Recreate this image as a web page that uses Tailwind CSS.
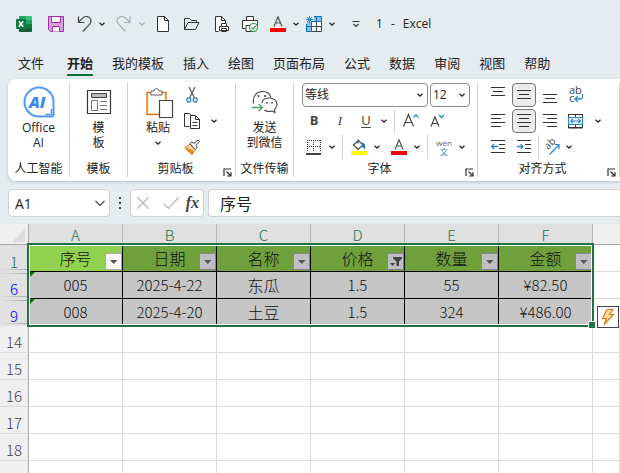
<!DOCTYPE html>
<html lang="zh-CN">
<head>
  <meta charset="UTF-8" />
  <meta name="viewport" content="width=device-width, initial-scale=1.0" />
  <title>1 - Excel</title>
  <script src="https://cdn.jsdelivr.net/npm/@tailwindcss/browser@4"></script>
</head>

<body class="min-h-screen overflow-hidden bg-[#e5ecef] font-['Open_Sans','Noto_Sans_CJK_SC',sans-serif] text-xs text-[#222]">

  <!-- ICONS -->
  <svg class="hidden">
    <symbol id="chev" viewBox="0 0 12 12"><path d="M3.500 4.800 6 7.200l2.500-2.400" fill="none" stroke="currentColor" stroke-width="1.300" /></symbol>
    <symbol id="launch" viewBox="0 0 9 9"><path d="M1 8V1h7M3.500 3.500 7.500 7.500M8 4v4H4" fill="none" stroke="#333" stroke-width="1.200" /></symbol>
    <symbol id="drop" viewBox="0 0 15 15"><path d="M4 6h7.500L7.750 10z" fill="#555" /></symbol>
  </svg>

  <!-- TITLE BAR -->
  <header class="flex h-12 items-center pl-4">
    <svg class="size-4 shrink-0" viewBox="0 0 16 16">
      <path d="M4 0h6v4H3V1a1 1 0 0 1 1-1z" fill="#21a366" /><path d="M10 0h5a1 1 0 0 1 1 1v3h-6z" fill="#33c481" />
      <path d="M3 4h7v4H3z" fill="#107c41" /><path d="M10 4h6v4h-6z" fill="#21a366" />
      <path d="M3 8h7v8H4a1 1 0 0 1-1-1z" fill="#185c37" /><path d="M10 8h6v4h-6z" fill="#107c41" /><path d="M9 12h7v3a1 1 0 0 1-1 1H9z" fill="#185c37" />
      <rect y="3" width="10" height="10" rx="1" fill="#0f7b40" />
      <path d="m2.800 5.200 4.400 5.600M7.200 5.200l-4.400 5.600" stroke="#fff" stroke-width="1.500" />
    </svg>
    <button class="ml-4" aria-label="保存">
      <svg class="size-4" viewBox="0 0 16 16" fill="#d9a0dc" stroke="#9a2fa5"><path d="M.5.500h15v15h-13l-2-2z" /><path d="M3.500.500h9v6h-9zM4.500 15.500v-5h7v5" fill="#fff" /></svg>
    </button>
    <button class="ml-3" aria-label="撤消">
      <svg class="size-4" viewBox="0 0 16 16" fill="none" stroke="#444" stroke-width="1.200"><path d="M2.500.500v6h6M2.500 6.300 7 1.900c2-1.900 5-1.800 6.700 0 1.700 1.700 1.700 4.600 0 6.300L6.800 15.500" /></svg>
    </button>
    <button class="ml-1 w-3" aria-label="撤消选项"><svg class="size-3"><use href="#chev" /></svg></button>
    <button class="ml-2 text-[#a5abae]" aria-label="恢复">
      <svg class="size-4" viewBox="0 0 16 16" fill="none" stroke="currentColor" stroke-width="1.200"><path d="M14 .500v6H8M14 6.300 9.300 1.900C7.300.100 4.300.100 2.500 1.900c-1.700 1.700-1.700 4.600 0 6.300l7 7.300" /></svg>
    </button>
    <button class="ml-1 w-3 text-[#a5abae]" aria-label="恢复选项"><svg class="size-3"><use href="#chev" /></svg></button>
    <button class="ml-2" aria-label="新建">
      <svg class="size-4" viewBox="0 0 16 16" fill="#fff" stroke="#333"><path d="M1.500.500h7l4 4v11h-11zM8.500.500v4h4" /></svg>
    </button>
    <button class="ml-3" aria-label="打开">
      <svg class="size-4" viewBox="0 0 16 16" fill="none" stroke="#333"><path d="M.500 13.500v-11h5l2 2h5v2M.500 13.500l3.500-7h11l-3.500 7z" /></svg>
    </button>
    <button class="ml-3.5" aria-label="打印预览">
      <svg class="size-4" viewBox="0 0 16 16" fill="#fff" stroke="#333"><path d="M4.500 15.500h-3V.500h6l4 4v3M7.500.500v4h4" /><path d="M7.500 10.500v-3h5v3M5.500 10.500h9v4h-9zM7.500 12.500h5v3h-5z" /></svg>
    </button>
    <button class="ml-3" aria-label="快速打印">
      <svg class="size-4" viewBox="0 0 16 16" fill="#fff" stroke="#333"><path d="M4.500 4.500v-4h7v4M3.500 12.500h-3v-8h15v8M4 9.500h8v6H4z" /><circle cx="11.500" cy="11.500" r="4" stroke="#3a9a54" stroke-width="1.200" /><path d="m9.500 11.500 1.500 1.500 2.800-3" fill="none" stroke="#3a9a54" stroke-width="1.300" /></svg>
    </button>
    <button class="ml-3" aria-label="字体颜色">
      <svg class="size-4" viewBox="0 0 16 16"><path d="M4 10.500 8 .700l4 9.800M5.300 7h5.400" fill="none" stroke="#555" stroke-width="1.200" /><path d="M0 12h16v4H0z" fill="#f00" /></svg>
    </button>
    <button class="ml-1 w-3" aria-label="字体颜色选项"><svg class="size-3"><use href="#chev" /></svg></button>
    <button class="ml-1" aria-label="表格样式">
      <svg class="size-4" viewBox="0 0 16 16"><path d="M1 6h14v9.500H1z" fill="#fff" /><path d="M8 1h7.500v4H8zM1 6h4v9.500H1z" fill="#83beec" /><path d="M5.500 6v9.500M10.500 1v14.500M1 10.500h14.500M6 15.500h9.500V5.500H6" fill="none" stroke="#444" /><path d="M8 .500h7.500v5H6M.500 8v7.500h5V6M.500 10.500h5M10.500.500v5" fill="none" stroke="#0f6cbd" /><path d="M3.500 0v7M0 3.500h7M1 1l5 5M6 1 1 6" stroke="#1e8bcd" /></svg>
    </button>
    <button class="ml-1 w-3" aria-label="表格样式选项"><svg class="size-3"><use href="#chev" /></svg></button>
    <button class="ml-2.5" aria-label="自定义快速访问工具栏">
      <svg class="size-4" viewBox="0 0 16 16" fill="none" stroke="#333" stroke-width="1.200"><path d="M4.500 5.500h7M5.500 8 8 10.500 10.500 8" /></svg>
    </button>
    <h1 class="ml-3 flex gap-2"><span>1</span><span>-</span><span>Excel</span></h1>
  </header>

  <!-- TABS -->
  <nav class="mb-[3px] flex gap-[19px] pl-[18px] text-[13px] leading-[22px] whitespace-nowrap">
    <button class="mr-1 border-b-2 border-transparent pt-1">文件</button>
    <button class="border-b-2 border-[#0f703b] pt-1 font-bold">开始</button>
    <button class="border-b-2 border-transparent pt-1">我的模板</button>
    <button class="border-b-2 border-transparent pt-1">插入</button>
    <button class="border-b-2 border-transparent pt-1">绘图</button>
    <button class="border-b-2 border-transparent pt-1">页面布局</button>
    <button class="border-b-2 border-transparent pt-1">公式</button>
    <button class="border-b-2 border-transparent pt-1">数据</button>
    <button class="border-b-2 border-transparent pt-1">审阅</button>
    <button class="border-b-2 border-transparent pt-1">视图</button>
    <button class="border-b-2 border-transparent pt-1">帮助</button>
  </nav>

  <!-- RIBBON -->
  <main>
    <div class="ml-2 flex rounded-l-lg bg-white pt-1 pb-1 whitespace-nowrap shadow-[0_1px_3px_#0003]">

      <section class="flex w-[62px] shrink-0 flex-col border-r border-[#d0d0d0]">
        <button class="flex h-[76px] flex-col items-center gap-0.5 pt-[3px] leading-[15px]">
          <svg class="size-8 shrink-0" viewBox="0 0 32 32">
            <path d="M16 1.500A14.500 14.500 0 1 0 16 30.500h12.500c1.200 0 2-.8 2-2V16A14.500 14.500 0 0 0 16 1.500z" fill="#fff" stroke="#4f9bf8" stroke-width="2" />
            <path d="M28.500 23v5.500H22" fill="none" stroke="#4f9bf8" stroke-width="1.500" />
            <text x="6" y="22" font-family="Open Sans" font-size="16" font-weight="800" font-style="italic" fill="#3f86f6">AI</text>
          </svg>
          <span>Office<br />AI</span>
        </button>
        <h2 class="mt-0.5 text-center leading-4">人工智能</h2>
      </section>

      <section class="flex w-[58px] shrink-0 flex-col border-r border-[#d0d0d0]">
        <button class="flex h-[76px] flex-col items-center gap-0.5 pt-[3px] leading-[15px]">
          <svg class="size-8 shrink-0" viewBox="0 0 32 32" fill="none" stroke="#444"><path d="M4.500 4.500h23v23h-23z" stroke="#333" stroke-width="1.200" /><path d="M8.500 7.500h15v4h-15z" fill="#bbb" /><path d="M8.500 14.500h6v10h-6z" stroke="#777" /><path d="M17 15.500h7M17 19.500h7M17 23.500h7" stroke="#777" /></svg>
          <span>模<br />板</span>
        </button>
        <h2 class="mt-0.5 text-center leading-4">模板</h2>
      </section>

      <section class="flex w-[108px] shrink-0 flex-col border-r border-[#d0d0d0]">
        <div class="flex h-[76px] pl-3.5">
          <button class="flex w-8 flex-col items-center gap-0.5 pt-[3px] leading-[15px]">
            <svg class="size-8 shrink-0" viewBox="0 0 32 32"><path d="M5 6.500h19v22H5z" fill="#fdf3e2" stroke="#e07b0f" stroke-width="1.500" /><path d="M7 8.500h15v18H7z" fill="#fff" /><path d="M9 9V5h3c0-3 5-3 5 0h3v4z" fill="#fff" stroke="#666" /><path d="M17.500 14.500h13v17h-13z" fill="#fff" stroke="#444" stroke-width="1.200" /></svg>
            <span>粘贴</span>
            <svg class="size-3"><use href="#chev" /></svg>
          </button>
          <div class="ml-1.5 grid content-start gap-0.5">
            <button class="grid h-6 w-6 place-items-center" aria-label="剪切">
              <svg class="size-4" viewBox="0 0 16 16" fill="none"><path d="M5 0 10.500 11M11 0 5.500 11" stroke="#555" stroke-width="1.200" /><circle cx="4.800" cy="13" r="2" stroke="#2b88d0" stroke-width="1.300" /><circle cx="11.200" cy="13" r="2" stroke="#2b88d0" stroke-width="1.300" /></svg>
            </button>
            <button class="grid h-6 w-6 place-items-center" aria-label="复制">
              <svg class="size-4" viewBox="0 0 16 16" fill="#fff" stroke="#333"><path d="M5.500 13.500h-5V.500h5l2 2" /><path d="M6.500 2.500h5l4 4v9h-9zM11.500 2.500v4h4M8.500 9.500h5M8.500 12.500h5" /></svg>
            </button>
            <button class="grid h-6 w-6 place-items-center" aria-label="格式刷">
              <svg class="size-4" viewBox="0 0 16 16"><path d="M1 8.500 6 5l5 5.500L8 15.500z" fill="#fbd6a4" stroke="#e07b0f" /><path d="M4 12.500 6.500 10M1.500 9 8 15.500l1.500-3z" fill="#ee8a1e" stroke="#e07b0f" /><path d="m6 4.500 2-1.500 2 1.500L14 1l1.500 1.500L12 6.500l1.200 2L11 10.500z" fill="#fff" stroke="#444" /></svg>
            </button>
          </div>
          <button class="ml-1 w-3" aria-label="复制选项"><svg class="size-3"><use href="#chev" /></svg></button>
        </div>
        <div class="mt-0.5 flex items-end leading-4">
          <h2 class="flex-1 text-center">剪贴板</h2>
          <button class="w-3" aria-label="剪贴板设置"><svg class="size-[9px]"><use href="#launch" /></svg></button>
        </div>
      </section>

      <section class="flex w-[58px] shrink-0 flex-col border-r border-[#d0d0d0]">
        <button class="flex h-[76px] flex-col items-center gap-0.5 pt-[3px] leading-[15px]">
          <svg class="size-8 shrink-0" viewBox="0 0 32 32" fill="none" stroke="#444" stroke-width="1.100"><path d="M4.500 17.500C3.500 9 8 5.500 13.500 5.500c4.500 0 7.500 2.500 8.500 6" /><path d="M13 17c0-3 3-5 7.500-5s7.500 3 7.500 6.500c0 2-1 3.500-2.500 5l.5 3-3-1.500c-3 1-5.500.500-7.500-1" /><path d="M9.500 9v2M16 9v2M18 16v1.500M23 16v1.500" stroke-width="1.600" /><path d="M3 21.500h10M9.500 18l4 3.500-4 3.500" stroke="#4aa266" stroke-width="1.300" /></svg>
          <span>发送<br />到微信</span>
        </button>
        <h2 class="mt-0.5 text-center leading-4">文件传输</h2>
      </section>

      <section class="flex w-[184px] shrink-0 flex-col border-r border-[#d0d0d0]">
        <div class="grid gap-0.5 pl-2">
          <div class="flex h-6 gap-0.5">
            <div class="relative w-[126px]">
              <select aria-label="字体" class="h-6 w-full appearance-none rounded border border-[#8a8a8a] bg-white pl-0.5"><option>等线</option></select>
              <svg class="pointer-events-none absolute top-1.5 right-0.5 size-3"><use href="#chev" /></svg>
            </div>
            <div class="relative w-10">
              <select aria-label="字号" class="h-6 w-full appearance-none rounded border border-[#8a8a8a] bg-white pl-0.5"><option>12</option></select>
              <svg class="pointer-events-none absolute top-1.5 right-0.5 size-3"><use href="#chev" /></svg>
            </div>
          </div>
          <div class="flex h-6 items-center text-[13px]">
            <button class="w-6 font-bold text-[#444]">B</button>
            <button class="ml-0.5 w-6 font-['Liberation_Serif'] italic text-[#444]">I</button>
            <button class="ml-0.5 w-6 text-[#444] underline underline-offset-2">U</button>
            <button class="w-3" aria-label="下划线选项"><svg class="size-3"><use href="#chev" /></svg></button>
            <div class="mx-1 h-6 w-px bg-[#d0d0d0]"></div>
            <button class="grid w-6 place-items-center" aria-label="增大字号">
              <svg class="size-4" viewBox="0 0 16 16" fill="none" stroke="#444" stroke-width="1.200"><path d="M.500 13.500 5.500 1.500l5 12M2.300 9.500h6.400" /><path d="m10.500 4.500 2.500-2.500 2.500 2.500" stroke="#2b88d0" stroke-width="1.300" /></svg>
            </button>
            <button class="ml-0.5 grid w-6 place-items-center" aria-label="减小字号">
              <svg class="size-4" viewBox="0 0 16 16" fill="none" stroke="#444" stroke-width="1.200"><path d="M2 13.500 6 4l4 9.500M3.500 10.500h5" /><path d="m10 2 2.500 2.500L15 2" stroke="#2b88d0" stroke-width="1.300" /></svg>
            </button>
          </div>
          <div class="flex h-6 items-center">
            <button class="grid w-6 place-items-center" aria-label="边框">
              <svg class="size-4" viewBox="0 0 16 16" fill="none" stroke="#333"><path d="M1 1.500h14M1 7.500h14M1.500 1v12M7.500 1v12M14.500 1v12" stroke-dasharray="1 1" /><path d="M0 15h15" stroke="#000" stroke-width="1.500" /></svg>
            </button>
            <button class="w-3" aria-label="边框选项"><svg class="size-3"><use href="#chev" /></svg></button>
            <div class="mx-1 h-6 w-px bg-[#d0d0d0]"></div>
            <button class="grid w-6 place-items-center" aria-label="填充颜色">
              <svg class="size-4" viewBox="0 0 16 16" fill="none"><path d="M7 .500v4M2.500 6 7.500 1.500l4.500 4.500-5 4.500z" stroke="#444" stroke-width="1.100" /><path d="M10.500 4c3 0 4 2 3 5.500-2-1-2.500-3-1.500-4" fill="#1e7cc0" stroke="#1e7cc0" /><path d="M0 12h16v4H0z" fill="#ff0" /></svg>
            </button>
            <button class="w-3" aria-label="填充颜色选项"><svg class="size-3"><use href="#chev" /></svg></button>
            <button class="ml-1 grid w-6 place-items-center" aria-label="字体颜色">
              <svg class="size-4" viewBox="0 0 16 16"><path d="M4 10.500 8 .700l4 9.800M5.300 7h5.400" fill="none" stroke="#555" stroke-width="1.200" /><path d="M0 12h16v4H0z" fill="#f00" /></svg>
            </button>
            <button class="w-3" aria-label="字体颜色选项"><svg class="size-3"><use href="#chev" /></svg></button>
            <div class="mx-1 h-6 w-px bg-[#d0d0d0]"></div>
            <button class="w-6 text-[8px] leading-[9px] text-[#666]">wén<br /><span class="text-[#2b88d0]">文</span></button>
            <button class="w-3" aria-label="拼音选项"><svg class="size-3"><use href="#chev" /></svg></button>
          </div>
        </div>
        <div class="mt-0.5 flex items-end leading-4">
          <h2 class="flex-1 text-center">字体</h2>
          <button class="w-3" aria-label="字体设置"><svg class="size-[9px]"><use href="#launch" /></svg></button>
        </div>
      </section>

      <section class="flex w-[142px] shrink-0 flex-col border-r border-[#d0d0d0]">
        <div class="grid gap-0.5 pl-2">
          <div class="flex h-6 items-center">
            <button class="grid size-6 place-items-center" aria-label="顶端对齐"><svg class="size-4" viewBox="0 0 16 16" stroke="#333"><path d="M1 .500h14M3 4.500h10M1 8.500h14" /></svg></button>
            <button class="ml-0.5 grid size-6 place-items-center rounded border border-[#777] bg-[#ebebeb]" aria-label="垂直居中"><svg class="size-4" viewBox="0 0 16 16" stroke="#333"><path d="M1 3.500h14M3 7.500h10M1 11.500h14" /></svg></button>
            <button class="ml-0.5 grid size-6 place-items-center" aria-label="底端对齐"><svg class="size-4" viewBox="0 0 16 16" stroke="#333"><path d="M1 7.500h14M3 11.500h10M1 15.500h14" /></svg></button>
            <button class="ml-0.5 grid size-6 place-items-center" aria-label="自动换行">
              <svg class="size-4 overflow-visible" viewBox="0 0 16 16"><g font-family="Open Sans" font-size="11" fill="#444"><text x="1" y="7">ab</text><text x="1" y="15">c</text></g><path d="M14.500 7v3.500c0 1-1 1.500-2 1.500H7.500M10 9l-3 3 3 3" fill="none" stroke="#2b88d0" stroke-width="1.300" /></svg>
            </button>
          </div>
          <div class="flex h-6 items-center">
            <button class="grid size-6 place-items-center" aria-label="左对齐"><svg class="size-4" viewBox="0 0 16 16" stroke="#333"><path d="M1 1.500h14M1 5.500h10M1 9.500h14M1 13.500h10" /></svg></button>
            <button class="ml-0.5 grid size-6 place-items-center rounded border border-[#777] bg-[#ebebeb]" aria-label="居中"><svg class="size-4" viewBox="0 0 16 16" stroke="#333"><path d="M1 1.500h14M3 5.500h10M1 9.500h14M3 13.500h10" /></svg></button>
            <button class="ml-0.5 grid size-6 place-items-center" aria-label="右对齐"><svg class="size-4" viewBox="0 0 16 16" stroke="#333"><path d="M1 1.500h14M5 5.500h10M1 9.500h14M5 13.500h10" /></svg></button>
            <button class="ml-0.5 grid size-6 place-items-center" aria-label="合并后居中">
              <svg class="size-4" viewBox="0 0 16 16" fill="none"><path d="M.500 1v14h14V1M.500 1.500h14M7.500 1v3M7.500 12v3M.500 14.500h14" stroke="#333" /><path d="M.500 4.500h14v7H.500z" fill="#eaf4fc" stroke="#2b88d0" stroke-width="1.200" /><path d="M3 8h9.500M5 5.800 2.800 8 5 10.200M10.300 5.800 12.500 8l-2.200 2.200" stroke="#2b88d0" stroke-width="1.200" /></svg>
            </button>
            <button class="ml-1 w-3" aria-label="合并选项"><svg class="size-3"><use href="#chev" /></svg></button>
          </div>
          <div class="flex h-6 items-center">
            <button class="grid size-6 place-items-center" aria-label="减少缩进量"><svg class="size-4" viewBox="0 0 16 16" fill="none" stroke="#333"><path d="M1 1.500h14M9 5.500h6M9 9.500h6M1 13.500h14" /><path d="M1.500 7.500H8M4 5 1.500 7.500 4 10" stroke="#2b88d0" stroke-width="1.300" /></svg></button>
            <button class="ml-0.5 grid size-6 place-items-center" aria-label="增加缩进量"><svg class="size-4" viewBox="0 0 16 16" fill="none" stroke="#333"><path d="M1 1.500h14M9 5.500h6M9 9.500h6M1 13.500h14" /><path d="M1 7.500h6.500M4.500 5 7 7.500 4.500 10" stroke="#2b88d0" stroke-width="1.300" /></svg></button>
            <div class="ml-0.5 h-6 w-px bg-[#d0d0d0]"></div>
            <button class="grid size-6 place-items-center" aria-label="方向">
              <svg class="size-4 overflow-visible" viewBox="0 0 16 16"><text x="0" y="0" transform="translate(5 11) rotate(-45)" font-family="Open Sans" font-size="10" fill="#444">ab</text><path d="M6.500 15.500 16 6M11.500 5.500H16V10" fill="none" stroke="#2b88d0" stroke-width="1.200" /></svg>
            </button>
            <button class="w-3" aria-label="方向选项"><svg class="size-3"><use href="#chev" /></svg></button>
          </div>
        </div>
        <div class="mt-0.5 flex items-end leading-4">
          <h2 class="flex-1 text-center">对齐方式</h2>
          <button class="w-3" aria-label="对齐设置"><svg class="size-[9px]"><use href="#launch" /></svg></button>
        </div>
      </section>
    </div>

    <!-- FORMULA BAR -->
    <div class="mt-2 mb-[7px] flex h-7 items-center pl-2">
      <div class="relative w-[102px] shrink-0">
        <input aria-label="名称框" value="A1" class="h-7 w-full rounded border border-[#d0d0d0] bg-white pl-1.5 text-sm" />
        <svg class="pointer-events-none absolute top-2 right-1 size-3" viewBox="0 0 12 12" fill="none" stroke="#444" stroke-width="1.200"><path d="m1.500 4 4.500 4.500L10.500 4" /></svg>
      </div>
      <svg class="mx-2 h-4 w-1 shrink-0" viewBox="0 0 4 16" fill="#444"><path d="M1 2h2v2H1zM1 7h2v2H1zM1 12h2v2H1z" /></svg>
      <div class="flex h-7 w-[74px] shrink-0 items-center justify-between rounded border border-[#d0d0d0] bg-white px-1">
        <button aria-label="取消"><svg class="size-4" viewBox="0 0 16 16" stroke="#b5b5b5" stroke-width="1.200"><path d="m2.500 2.500 11 11M13.500 2.500l-11 11" /></svg></button>
        <button class="ml-1.5" aria-label="输入"><svg class="size-4" viewBox="0 0 16 16" fill="none" stroke="#b5b5b5" stroke-width="1.200"><path d="m.500 8.500 5 5 10-11" /></svg></button>
        <button class="font-['Liberation_Serif'] text-base leading-5 font-bold italic text-[#444]" aria-label="插入函数">fx</button>
      </div>
      <input aria-label="编辑栏" value="序号" class="ml-1 h-7 min-w-0 flex-1 rounded-l border border-r-0 border-[#d0d0d0] bg-white pl-[11px] text-base" />
    </div>

    <!-- SHEET -->
    <div class="relative bg-white">
      <table class="w-full table-fixed border-separate border-spacing-0 text-center font-['Noto_Sans_CJK_SC',sans-serif] text-[15px] leading-5 font-light text-[#111]">
        <colgroup>
          <col class="w-[29px]" /><col class="w-[94px]" /><col class="w-[94px]" /><col class="w-[94px]" /><col class="w-[94px]" /><col class="w-[94px]" /><col class="w-[94px]" /><col />
        </colgroup>
        <thead class="text-[#217346]">
          <tr class="h-[21px] bg-[#e0e0e0]">
            <th class="border-r border-b border-[#a8a8a8] bg-[#efefef] p-0 align-bottom"><svg class="ml-3 h-[15px] w-[13px]" viewBox="0 0 13 15"><path d="M13 0v13H0z" fill="#dcdcdc" /></svg></th>
            <th class="border-r border-[#b5b5b5] p-0 font-light">A</th>
            <th class="border-r border-[#b5b5b5] p-0 font-light">B</th>
            <th class="border-r border-[#b5b5b5] p-0 font-light">C</th>
            <th class="border-r border-[#b5b5b5] p-0 font-light">D</th>
            <th class="border-r border-[#b5b5b5] p-0 font-light">E</th>
            <th class="border-r border-[#b5b5b5] p-0 font-light">F</th>
            <th class="border-b border-[#a8a8a8] bg-[#efefef] p-0"></th>
          </tr>
        </thead>
        <tbody>
          <tr class="h-[27px] bg-[#70a03c] text-base leading-5">
            <th class="border-r border-[#a8a8a8] bg-[linear-gradient(to_right,#e1e1e1,transparent),linear-gradient(#e1e1e1_24px,#a8a8a8_24px,#a8a8a8_25px,#e1e1e1_25px)] p-0 align-bottom text-[15px] font-light text-[#217346]">1</th>
            <td class="relative border-r border-b border-black bg-[#92d050] p-0">序号<button class="absolute right-0 bottom-px size-[17px] border border-[#a9a9b5] bg-[#f8f8fb]" aria-label="筛选序号"><svg class="size-[15px]"><use href="#drop" /></svg></button></td>
            <td class="relative border-r border-b border-black p-0">日期<button class="absolute right-0 bottom-px size-[17px] border border-[#85858f] bg-[#bfbfc3]" aria-label="筛选日期"><svg class="size-[15px]"><use href="#drop" /></svg></button></td>
            <td class="relative border-r border-b border-black p-0">名称<button class="absolute right-0 bottom-px size-[17px] border border-[#85858f] bg-[#bfbfc3]" aria-label="筛选名称"><svg class="size-[15px]"><use href="#drop" /></svg></button></td>
            <td class="relative border-r border-b border-black p-0">价格<button class="absolute right-0 bottom-px size-[17px] border border-[#85858f] bg-[#bfbfc3]" aria-label="筛选价格"><svg class="size-[15px]" viewBox="0 0 15 15" fill="#444"><path d="M5 3h9v1.500l-3 3V12H8.500V7.500L5 4.500zM2 9h5l-2.500 3z" /></svg></button></td>
            <td class="relative border-r border-b border-black p-0">数量<button class="absolute right-0 bottom-px size-[17px] border border-[#85858f] bg-[#bfbfc3]" aria-label="筛选数量"><svg class="size-[15px]"><use href="#drop" /></svg></button></td>
            <td class="relative border-r border-b border-black p-0">金额<button class="absolute right-0 bottom-px size-[17px] border border-[#85858f] bg-[#bfbfc3]" aria-label="筛选金额"><svg class="size-[15px]"><use href="#drop" /></svg></button></td>
            <td class="border-b border-[#dcdcdc] bg-white p-0"></td>
          </tr>
          <tr class="h-[27px] bg-[#c6c6c6]">
            <th class="border-r border-[#a8a8a8] bg-[linear-gradient(to_right,#e1e1e1,transparent),linear-gradient(#e1e1e1_1px,#a8a8a8_1px,#a8a8a8_2px,#e1e1e1_2px,#e1e1e1_24px,#a8a8a8_24px,#a8a8a8_25px,#e1e1e1_25px)] p-0 align-bottom font-light text-[#00f]">6</th>
            <td class="relative border-r border-b border-black p-0"><svg class="absolute top-0 left-px size-[5px]" viewBox="0 0 5 5"><path d="M0 0h5L0 5z" fill="#0a6b12" /></svg>005</td>
            <td class="border-r border-b border-black p-0">2025-4-22</td>
            <td class="border-r border-b border-black p-0 text-base leading-5">东瓜</td>
            <td class="border-r border-b border-black p-0">1.5</td>
            <td class="border-r border-b border-black p-0">55</td>
            <td class="border-r border-b border-black p-0">¥82.50</td>
            <td class="border-b border-[#dcdcdc] bg-white p-0"></td>
          </tr>
          <tr class="h-[27px] bg-[#c6c6c6]">
            <th class="border-r border-[#a8a8a8] bg-[linear-gradient(to_right,#e1e1e1,transparent),linear-gradient(#e1e1e1_1px,#a8a8a8_1px,#a8a8a8_2px,#e1e1e1_2px,#e1e1e1_24px,#a8a8a8_24px,#a8a8a8_25px,#e1e1e1_25px)] p-0 align-bottom font-light text-[#00f]">9</th>
            <td class="relative border-r border-b border-black p-0"><svg class="absolute top-0 left-px size-[5px]" viewBox="0 0 5 5"><path d="M0 0h5L0 5z" fill="#0a6b12" /></svg>008</td>
            <td class="border-r border-b border-black p-0">2025-4-20</td>
            <td class="border-r border-b border-black p-0 text-base leading-5">土豆</td>
            <td class="border-r border-b border-black p-0">1.5</td>
            <td class="border-r border-b border-black p-0">324</td>
            <td class="border-r border-b border-black p-0">¥486.00</td>
            <td class="border-b border-[#dcdcdc] bg-white p-0"></td>
          </tr>
          <tr class="h-[27px] *:border-r *:border-b *:border-[#dcdcdc] *:p-0">
            <th class="border-r-[#a8a8a8]! bg-[#efefef] align-bottom font-light text-[#444]">14</th>
            <td></td><td></td><td></td><td></td><td></td><td></td><td></td>
          </tr>
          <tr class="h-[27px] *:border-r *:border-b *:border-[#dcdcdc] *:p-0">
            <th class="border-r-[#a8a8a8]! bg-[#efefef] align-bottom font-light text-[#444]">15</th>
            <td></td><td></td><td></td><td></td><td></td><td></td><td></td>
          </tr>
          <tr class="h-[27px] *:border-r *:border-b *:border-[#dcdcdc] *:p-0">
            <th class="border-r-[#a8a8a8]! bg-[#efefef] align-bottom font-light text-[#444]">16</th>
            <td></td><td></td><td></td><td></td><td></td><td></td><td></td>
          </tr>
          <tr class="h-[27px] *:border-r *:border-b *:border-[#dcdcdc] *:p-0">
            <th class="border-r-[#a8a8a8]! bg-[#efefef] align-bottom font-light text-[#444]">17</th>
            <td></td><td></td><td></td><td></td><td></td><td></td><td></td>
          </tr>
          <tr class="h-[27px] *:border-r *:border-b *:border-[#dcdcdc] *:p-0">
            <th class="border-r-[#a8a8a8]! bg-[#efefef] align-bottom font-light text-[#444]">18</th>
            <td></td><td></td><td></td><td></td><td></td><td></td><td></td>
          </tr>
          <tr class="h-[27px] *:border-r *:border-b *:border-[#dcdcdc] *:p-0">
            <th class="border-r-[#a8a8a8]! bg-[#efefef]"></th>
            <td></td><td></td><td></td><td></td><td></td><td></td><td></td>
          </tr>
        </tbody>
      </table>

      <!-- selection frame, fill handle, quick analysis -->
      <div class="pointer-events-none absolute top-[19px] left-[27px] h-[84px] w-[567px] border-2 border-[#1f7346] inset-ring inset-ring-white">
        <div class="absolute -right-[3px] -bottom-[3px] size-[7px] border-t border-l border-white bg-[#1f7346]"></div>
      </div>
      <button class="absolute top-[82px] left-[597px] grid size-[22px] place-items-center border border-[#444] bg-white" aria-label="快速分析">
        <svg class="size-4" viewBox="0 0 16 16"><path d="M7 .500h6L9.500 5.500h4L4 15.500l2.500-6H2.500z" fill="#fde0a0" stroke="#e0780f" stroke-width="1.200" /></svg>
      </button>
    </div>
  </main>

</body>
</html>
